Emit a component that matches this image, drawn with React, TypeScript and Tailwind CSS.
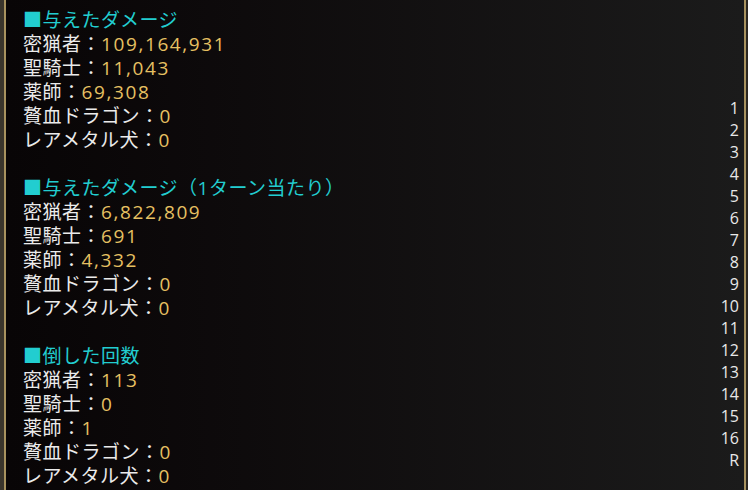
const sections = [
  {
    title: "■与えたダメージ",
    rows: [
      ["密猟者", "109,164,931"],
      ["聖騎士", "11,043"],
      ["薬師", "69,308"],
      ["贅血ドラゴン", "0"],
      ["レアメタル犬", "0"],
    ],
  },
  {
    title: "■与えたダメージ（1ターン当たり）",
    rows: [
      ["密猟者", "6,822,809"],
      ["聖騎士", "691"],
      ["薬師", "4,332"],
      ["贅血ドラゴン", "0"],
      ["レアメタル犬", "0"],
    ],
  },
  {
    title: "■倒した回数",
    rows: [
      ["密猟者", "113"],
      ["聖騎士", "0"],
      ["薬師", "1"],
      ["贅血ドラゴン", "0"],
      ["レアメタル犬", "0"],
    ],
  },
];

const pages = ["1", "2", "3", "4", "5", "6", "7", "8", "9", "10", "11", "12", "13", "14", "15", "16", "R"];

export default function App() {
  return (
    <div
      className="flex h-[490px] w-[748px] overflow-hidden bg-[#2a2620]"
      style={{ fontFamily: '"Open Sans", "Noto Sans CJK JP", sans-serif' }}
    >
      <div className="w-[4px] bg-[#3a352c]" />
      <div className="w-[2px] bg-[#a8925e]" />
      <div className="flex flex-1 bg-gradient-to-r from-[#080506] to-[#1b1b1b]">
        <div className="flex-1 pl-[17px] pt-[8px] text-[19px] leading-[24px] tracking-[0.5px] text-[#ebebeb]">
          {sections.map((s, i) => (
            <div key={i} className="mb-[24px]">
              <div className="text-[#22cdd0]">{s.title}</div>
              {s.rows.map(([name, val]) => (
                <div key={name} className="whitespace-nowrap">
                  {name}：<span className="tracking-[1.6px] text-[#e6c062]">{val}</span>
                </div>
              ))}
            </div>
          ))}
        </div>
        <div className="flex flex-col items-end pr-[5px] pt-[97px] text-[16px] leading-[22px] text-[#e8e8e8]">
          {pages.map((p) => (
            <div key={p}>{p}</div>
          ))}
        </div>
      </div>
      <div className="w-[2px] bg-[#a8925e]" />
      <div className="w-[2px] bg-[#2a2620]" />
    </div>
  );
}
